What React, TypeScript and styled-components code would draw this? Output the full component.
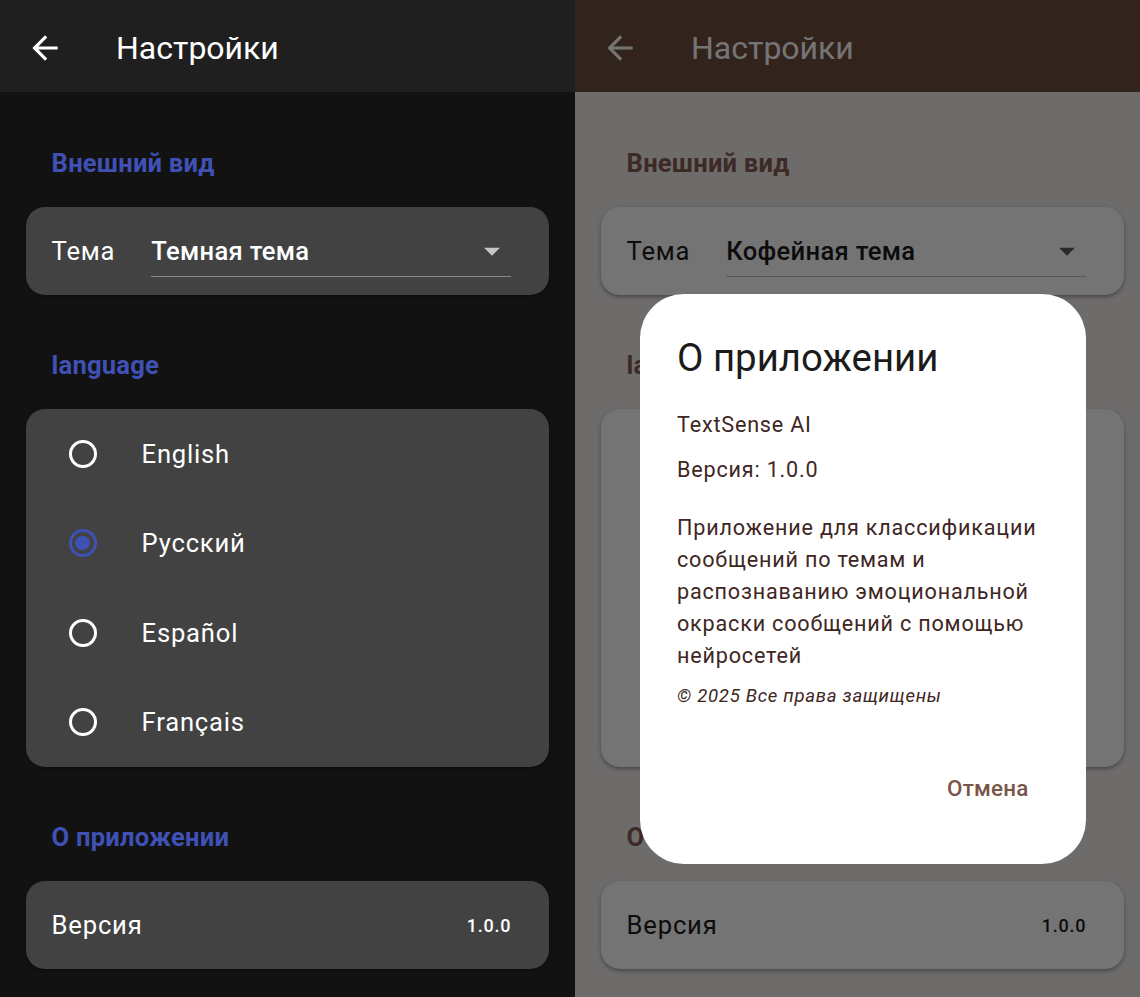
import React from "react";
import styled, { createGlobalStyle, ThemeProvider } from "styled-components";

const GlobalStyle = createGlobalStyle`
  html, body {
    margin: 0;
    padding: 0;
    overflow: hidden;
    background: #121212;
  }
  body {
    font-family: Roboto, "Noto Sans", "DejaVu Sans", sans-serif;
    -webkit-font-smoothing: antialiased;
  }
`;

const darkTheme = {
  bar: "#1f1f1f",
  barText: "#ffffff",
  bg: "#121212",
  card: "#424242",
  shadow: "0 1px 3px rgba(0, 0, 0, 0.4)",
  accent: "#3f51b5",
  text: "#ffffff",
  line: "#8a8a8a",
  arrow: "#c6c6c6",
  radio: "#ffffff",
  radioOn: "#3f51b5",
};

const coffeeTheme = {
  bar: "#6d4c41",
  barText: "#ffffff",
  bg: "#efebe9",
  card: "#fdfdfd",
  shadow: "0 2px 4px rgba(0, 0, 0, 0.35)",
  accent: "#855d53",
  text: "#1c1c1c",
  line: "#bdbdbd",
  arrow: "#5a5a5a",
  radio: "#5d4037",
  radioOn: "#795548",
};

type Palette = typeof darkTheme;

const Frame = styled.div`
  display: flex;
  width: 1140px;
  height: 997px;
  overflow: hidden;
`;

const Phone = styled.div<{ theme: Palette }>`
  position: relative;
  flex-shrink: 0;
  width: 575px;
  height: 997px;
  overflow: hidden;
  background: ${(p) => p.theme.bg};
`;

const AppBar = styled.header`
  display: flex;
  align-items: center;
  box-sizing: border-box;
  height: 92px;
  padding: 4px 0 0 26px;
  background: ${(p) => p.theme.bar};
  color: ${(p) => p.theme.barText};
`;

const BackIcon = styled.svg`
  width: 38px;
  height: 38px;
  fill: currentColor;
  flex-shrink: 0;
`;

const Title = styled.h1`
  margin: 0 0 0 52px;
  font-size: 32px;
  font-weight: 400;
  line-height: 40px;
`;

const Content = styled.main`
  padding: 0 25.6px;
  display: flex;
  flex-direction: column;
`;

const Section = styled.section<{ $first?: boolean }>`
  margin-top: ${(p) => (p.$first ? 55 : 54)}px;
`;

const SectionTitle = styled.h2`
  margin: 0 0 28px;
  padding-left: 26px;
  font-size: 25.6px;
  font-weight: 700;
  line-height: 32px;
  letter-spacing: 0.2px;
  color: ${(p) => p.theme.accent};
`;

const Card = styled.div`
  background: ${(p) => p.theme.card};
  border-radius: 19px;
  box-shadow: ${(p) => p.theme.shadow};
  color: ${(p) => p.theme.text};
`;

const Row = styled.div`
  display: flex;
  align-items: center;
  height: 88px;
  padding: 0 38px 0 26px;
`;

const Label = styled.span`
  font-size: 25.6px;
  letter-spacing: 0.8px;
`;

const Select = styled.div`
  flex: 1;
  display: flex;
  align-items: center;
  justify-content: space-between;
  height: 50px;
  margin-left: 36px;
  border-bottom: 1px solid ${(p) => p.theme.line};
`;

const SelectValue = styled.span`
  font-size: 25.6px;
  font-weight: 500;
  letter-spacing: 0.3px;
`;

const DropIcon = styled.svg`
  width: 38px;
  height: 38px;
  fill: ${(p) => p.theme.arrow};
`;

const OptionRow = styled.label`
  display: flex;
  align-items: center;
  height: 89.5px;
  padding-left: 43px;
  font-size: 25.6px;
  letter-spacing: 0.8px;
`;

const Radio = styled.span<{ $on?: boolean }>`
  position: relative;
  box-sizing: border-box;
  width: 28px;
  height: 28px;
  margin-right: 45px;
  border-radius: 50%;
  border: 3px solid ${(p) => (p.$on ? p.theme.radioOn : p.theme.radio)};

  &::after {
    content: "";
    display: ${(p) => (p.$on ? "block" : "none")};
    position: absolute;
    left: 3.6px;
    top: 3.6px;
    width: 14.4px;
    height: 14.4px;
    border-radius: 50%;
    background: ${(p) => p.theme.radioOn};
  }
`;

const VersionRow = styled(Row)`
  justify-content: space-between;
`;

const VersionValue = styled.span`
  font-size: 18px;
  font-weight: 500;
  letter-spacing: 0.8px;
`;

const Scrim = styled.div`
  position: absolute;
  inset: 0;
  background: rgba(0, 0, 0, 0.54);
`;

const Dialog = styled.div`
  position: absolute;
  left: 65px;
  top: 294px;
  width: 446px;
  height: 570px;
  box-sizing: border-box;
  display: flex;
  flex-direction: column;
  padding: 38.4px 38.4px 44px 37px;
  background: #ffffff;
  border-radius: 44px;
  color: #3e2723;
`;

const DialogTitle = styled.h3`
  margin: 0 0 25.6px;
  font-size: 38.4px;
  font-weight: 400;
  line-height: 51.2px;
  color: #1b1b1b;
`;

const Para = styled.p<{ $gap?: number }>`
  margin: ${(p) => p.$gap ?? 0}px 0 0;
  font-size: 21.6px;
  line-height: 32px;
  letter-spacing: 0.8px;
`;

const Copyright = styled.p`
  margin: 12.8px 0 0;
  font-size: 18.6px;
  font-style: italic;
  line-height: 25.6px;
  letter-spacing: 0.7px;
`;

const Actions = styled.div`
  display: flex;
  justify-content: flex-end;
  margin-top: auto;
`;

const TextButton = styled.button`
  height: 64px;
  padding: 0 19.2px;
  border: 0;
  background: none;
  font-family: inherit;
  font-size: 22.4px;
  font-weight: 500;
  letter-spacing: 0.2px;
  color: #795548;
`;

const languages = ["English", "Русский", "Español", "Français"];

const ArrowBack = () => (
  <BackIcon viewBox="0 0 24 24">
    <path d="M20 11H7.83l5.59-5.59L12 4l-8 8 8 8 1.41-1.41L7.83 13H20v-2z" />
  </BackIcon>
);

const SettingsScreen: React.FC<{ themeName: string; withDialog?: boolean }> = ({
  themeName,
  withDialog,
}) => (
  <Phone>
    <AppBar>
      <ArrowBack />
      <Title>Настройки</Title>
    </AppBar>

    <Content>
      <Section $first>
        <SectionTitle>Внешний вид</SectionTitle>
        <Card>
          <Row>
            <Label>Тема</Label>
            <Select>
              <SelectValue>{themeName}</SelectValue>
              <DropIcon viewBox="0 0 24 24">
                <path d="M7 10l5 5 5-5z" />
              </DropIcon>
            </Select>
          </Row>
        </Card>
      </Section>

      <Section>
        <SectionTitle>language</SectionTitle>
        <Card>
          {languages.map((lang) => (
            <OptionRow key={lang}>
              <Radio $on={lang === "Русский"} />
              {lang}
            </OptionRow>
          ))}
        </Card>
      </Section>

      <Section>
        <SectionTitle>О приложении</SectionTitle>
        <Card>
          <VersionRow>
            <Label>Версия</Label>
            <VersionValue>1.0.0</VersionValue>
          </VersionRow>
        </Card>
      </Section>
    </Content>

    {withDialog && (
      <>
        <Scrim />
        <Dialog role="dialog">
          <DialogTitle>О приложении</DialogTitle>
          <Para>TextSense AI</Para>
          <Para $gap={12.8}>Версия: 1.0.0</Para>
          <Para $gap={25.6}>
            Приложение для классификации сообщений по темам и распознаванию
            эмоциональной окраски сообщений с помощью нейросетей
          </Para>
          <Copyright>© 2025 Все права защищены</Copyright>
          <Actions>
            <TextButton>Отмена</TextButton>
          </Actions>
        </Dialog>
      </>
    )}
  </Phone>
);

const App: React.FC = () => (
  <>
    <GlobalStyle />
    <Frame>
      <ThemeProvider theme={darkTheme}>
        <SettingsScreen themeName="Темная тема" />
      </ThemeProvider>
      <ThemeProvider theme={coffeeTheme}>
        <SettingsScreen themeName="Кофейная тема" withDialog />
      </ThemeProvider>
    </Frame>
  </>
);

export default App;
